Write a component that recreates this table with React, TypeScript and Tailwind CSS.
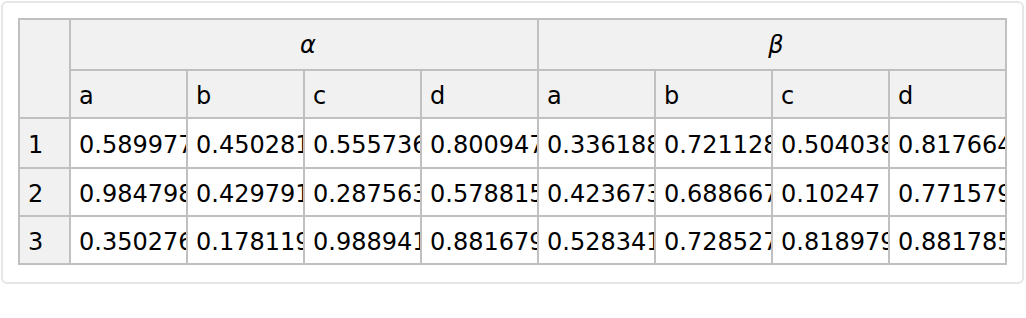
import React from "react";

const groups = [
  {
    label: "α",
    rows: [
      ["0.589977", "0.450281", "0.555736", "0.800947"],
      ["0.984798", "0.429791", "0.287563", "0.578815"],
      ["0.350276", "0.178119", "0.988941", "0.881679"],
    ],
  },
  {
    label: "β",
    rows: [
      ["0.336188", "0.721128", "0.504038", "0.817664"],
      ["0.423673", "0.688667", "0.10247", "0.771579"],
      ["0.528341", "0.728527", "0.818979", "0.881785"],
    ],
  },
];

const subCols = ["a", "b", "c", "d"];
const rowHeights = ["h-[50px]", "h-[48px]", "h-[48px]"];

const cell =
  "border-r-2 border-b-2 border-[#c0c0c0] flex items-center overflow-hidden whitespace-nowrap pl-2";

const App: React.FC = () => {
  return (
    <div className="w-[1023px] ml-px mt-px border-2 border-[#e6e6e6] rounded-md bg-white pl-[15px] pt-[15px] pb-[17px] font-['DejaVu_Sans',sans-serif] text-[24px] text-black">
      <div className="grid grid-cols-[51px_repeat(8,117px)] w-max border-l-2 border-t-2 border-[#c0c0c0]">
        {/* header */}
        <div className={`${cell} row-span-2 bg-[#f1f1f1]`} />
        {groups.map((g) => (
          <div
            key={g.label}
            className={`${cell} col-span-4 h-[51px] justify-center pl-0 bg-[#f1f1f1] italic`}
          >
            {g.label}
          </div>
        ))}
        {groups.map((g) =>
          subCols.map((c) => (
            <div key={g.label + c} className={`${cell} h-[48px] pt-1 bg-[#f1f1f1]`}>
              {c}
            </div>
          ))
        )}

        {/* body */}
        {[0, 1, 2].map((r) => (
          <React.Fragment key={r}>
            <div className={`${cell} ${rowHeights[r]} pt-1 bg-[#f1f1f1]`}>{r + 1}</div>
            {groups.map((g) =>
              g.rows[r].map((v, i) => (
                <div key={g.label + i} className={`${cell} ${rowHeights[r]} pt-1 bg-white`}>
                  {v}
                </div>
              ))
            )}
          </React.Fragment>
        ))}
      </div>
    </div>
  );
};

export default App;
